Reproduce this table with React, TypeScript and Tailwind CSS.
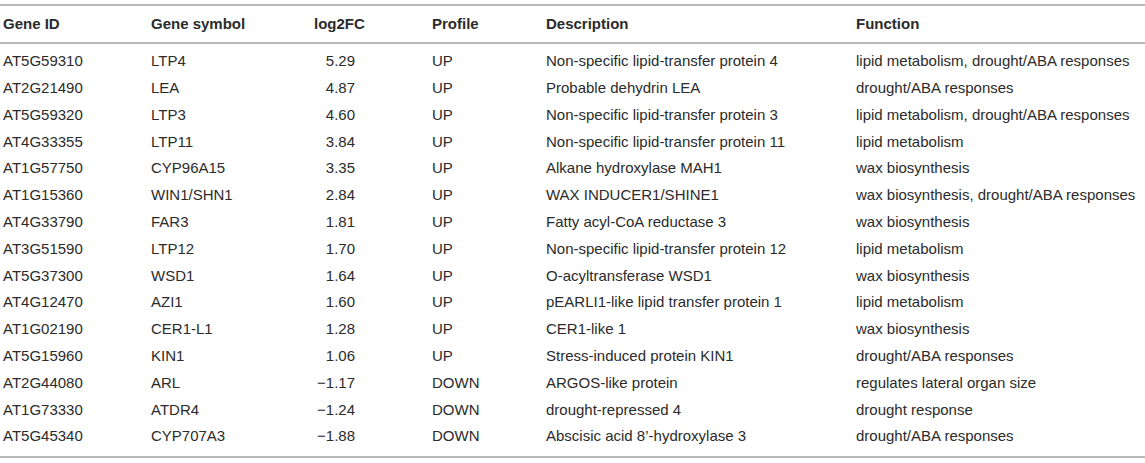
const rows: [string, string, string, string, string, string][] = [
  ['AT5G59310', 'LTP4', '5.29', 'UP', 'Non-specific lipid-transfer protein 4', 'lipid metabolism, drought/ABA responses'],
  ['AT2G21490', 'LEA', '4.87', 'UP', 'Probable dehydrin LEA', 'drought/ABA responses'],
  ['AT5G59320', 'LTP3', '4.60', 'UP', 'Non-specific lipid-transfer protein 3', 'lipid metabolism, drought/ABA responses'],
  ['AT4G33355', 'LTP11', '3.84', 'UP', 'Non-specific lipid-transfer protein 11', 'lipid metabolism'],
  ['AT1G57750', 'CYP96A15', '3.35', 'UP', 'Alkane hydroxylase MAH1', 'wax biosynthesis'],
  ['AT1G15360', 'WIN1/SHN1', '2.84', 'UP', 'WAX INDUCER1/SHINE1', 'wax biosynthesis, drought/ABA responses'],
  ['AT4G33790', 'FAR3', '1.81', 'UP', 'Fatty acyl-CoA reductase 3', 'wax biosynthesis'],
  ['AT3G51590', 'LTP12', '1.70', 'UP', 'Non-specific lipid-transfer protein 12', 'lipid metabolism'],
  ['AT5G37300', 'WSD1', '1.64', 'UP', 'O-acyltransferase WSD1', 'wax biosynthesis'],
  ['AT4G12470', 'AZI1', '1.60', 'UP', 'pEARLI1-like lipid transfer protein 1', 'lipid metabolism'],
  ['AT1G02190', 'CER1-L1', '1.28', 'UP', 'CER1-like 1', 'wax biosynthesis'],
  ['AT5G15960', 'KIN1', '1.06', 'UP', 'Stress-induced protein KIN1', 'drought/ABA responses'],
  ['AT2G44080', 'ARL', '\u22121.17', 'DOWN', 'ARGOS-like protein', 'regulates lateral organ size'],
  ['AT1G73330', 'ATDR4', '\u22121.24', 'DOWN', 'drought-repressed 4', 'drought response'],
  ['AT5G45340', 'CYP707A3', '\u22121.88', 'DOWN', 'Abscisic acid 8\u2019-hydroxylase 3', 'drought/ABA responses'],
];

const cols = 'grid grid-cols-[148px_163px_118px_114px_310px_1fr]';

export default function App() {
  return (
    <div className="w-[1145px] h-[463px] bg-white pt-[4px] text-[#2b2b2b] font-['Liberation_Sans',Arial,sans-serif]">
      <div className="border-t-2 border-b-2 border-[#b8b8b8]">
        <div className={`${cols} pl-[3px] h-[38px] items-center text-[15px] font-bold border-b-2 border-[#b8b8b8]`}>
          <span>Gene ID</span>
          <span>Gene symbol</span>
          <span>log2FC</span>
          <span>Profile</span>
          <span>Description</span>
          <span>Function</span>
        </div>
        <div className="pt-[4px] pb-[6px] text-[15px]">
          {rows.map((r) => (
            <div key={r[0]} className={`${cols} pl-[3px] h-[26.8px] items-center`}>
              <span>{r[0]}</span>
              <span>{r[1]}</span>
              <span className="text-right pr-[77px]">{r[2]}</span>
              <span>{r[3]}</span>
              <span>{r[4]}</span>
              <span className="whitespace-nowrap">{r[5]}</span>
            </div>
          ))}
        </div>
      </div>
    </div>
  );
}
